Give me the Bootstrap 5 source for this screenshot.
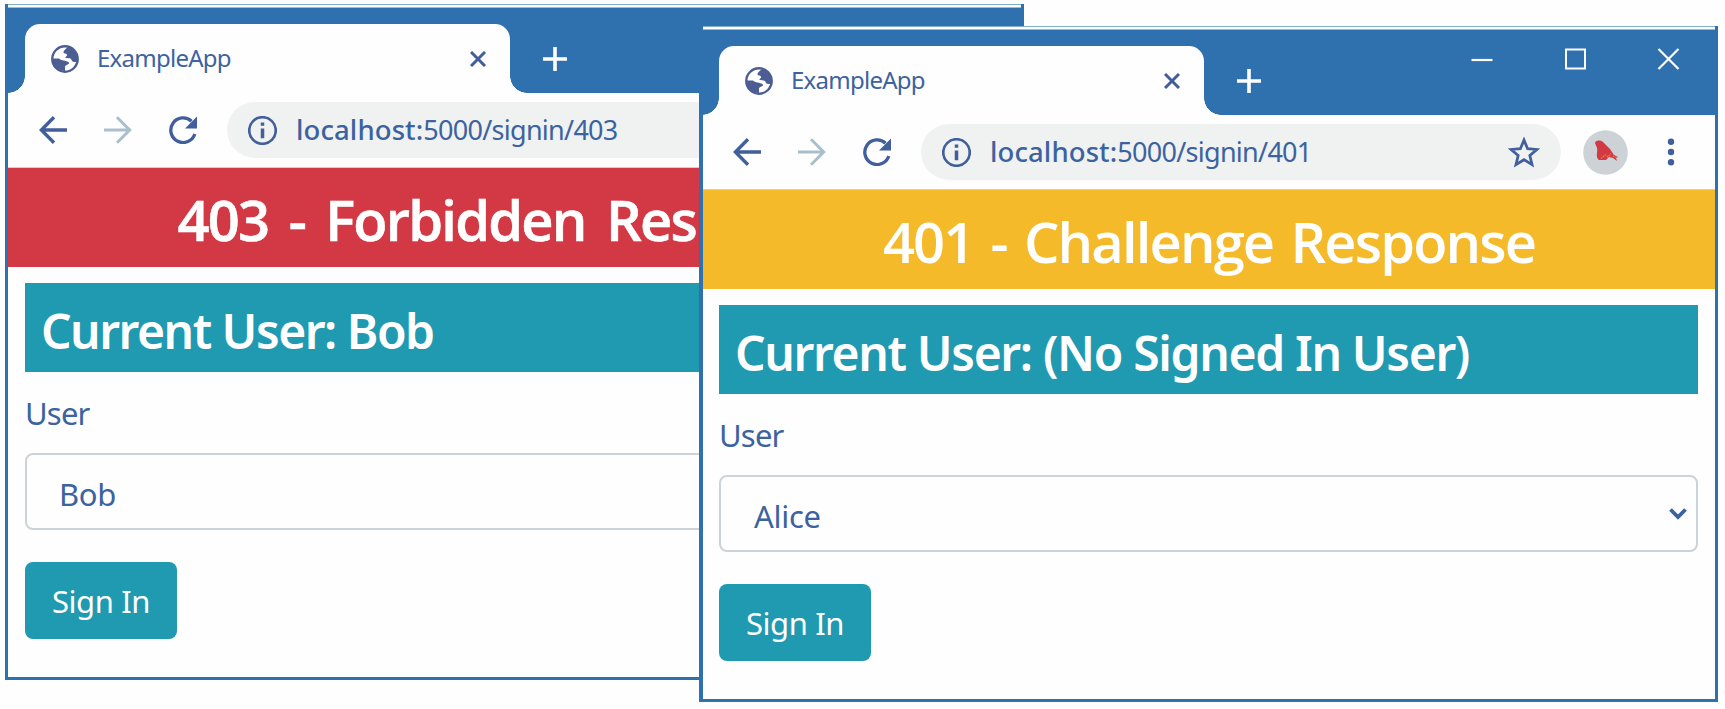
<!DOCTYPE html>
<html lang="en">
<head>
<meta charset="utf-8">
<meta name="viewport" content="width=device-width, initial-scale=1">
<title>ExampleApp</title>
<link href="https://cdn.jsdelivr.net/npm/bootstrap@5.3.0/dist/css/bootstrap.min.css" rel="stylesheet">
<style>
:root{--chrome:#2f70af;--ink:#3c62a0;--teal:#1f9ab1;--line:#cdd2d6}
body{background:#fefefe;font-family:"Noto Sans","Open Sans",sans-serif;color:var(--ink);height:709px;overflow:hidden}
svg{display:block;flex:none;overflow:visible}
.win{position:absolute;width:1019px;height:676px;background:#fefefe;border:3px solid var(--chrome);border-top:0}
.win-a{left:5px;top:4px}
.win-b{left:699px;top:26px}
.win-b{border-left-width:4px}
.win-edge{height:4px;border-top:1px solid #7fb0c8;border-bottom:1px solid #9bbdd2;background:#fff;flex:none}
.strip{height:85px;padding:16px 0 0 17px;background:var(--chrome);flex:none}
.win-b .strip{padding-left:16px}
.tab{position:relative;width:485px;height:69px;background:#fefefe;border-radius:15px 15px 0 0;padding:0 24px 0 26px}
.tab::before,.tab::after{content:"";position:absolute;bottom:0;width:17px;height:17px}
.tab::before{left:-17px;background:radial-gradient(circle at 0 0,var(--chrome) 16.5px,#fefefe 17px)}
.tab::after{right:-17px;background:radial-gradient(circle at 100% 0,var(--chrome) 16.5px,#fefefe 17px)}
.tab-name{font-size:24px;line-height:30px;letter-spacing:-.75px;margin:-1px 0 0 18px}
.new-tab{margin:5px 0 0 33px}
.controls{margin:2px 36px 0 0;gap:71px}
.toolbar-row{height:75px;padding:0 40px 0 31px;flex:none;border-bottom:1px solid var(--line)}
.win-b .toolbar-row{padding-left:30px}
.tool-icon{margin-left:37px}
.avatar{margin-left:22px}
.address{height:56px;border-radius:28px;background:#f0f2f1;margin-left:30px;width:640px;padding:0 22px 0 21px}
.url{font-size:27px;line-height:36px;margin:-1px 0 0 19px;letter-spacing:-.72px;white-space:nowrap}
.url b{font-size:27.5px;font-weight:500;letter-spacing:.1px}
.banner{height:99px;line-height:99px;padding-top:2px;font-family:"Open Sans","Noto Sans",sans-serif;font-size:56px;font-weight:600;color:#fff;text-align:center;margin:0;white-space:nowrap;flex:none}
.banner-no{background:#d33845;letter-spacing:-1.75px;word-spacing:7.5px;-webkit-text-stroke:.6px #fff}
.banner-ask{background:#f4ba29;letter-spacing:-1.85px;word-spacing:4.5px}
.content{padding:16px 17px 0}
.win-b .content{padding-left:16px}
.who{height:89px;line-height:93px;padding-top:1px;background:var(--teal);color:#fff;font-size:48px;font-weight:600;letter-spacing:-1.35px;padding-left:16px;margin:0 0 19px}
.win-a .who{letter-spacing:-1.5px}
.user-label{font-size:31px;line-height:44px;letter-spacing:-.8px;margin-bottom:18px;display:block}
.picker{height:77px;border:2px solid var(--line);border-radius:8px;padding:5px 9px 0 33px;font-size:31px;margin-bottom:32px;letter-spacing:-.3px}
.picker svg{margin-top:-4px}
.win-a .picker{padding-left:32px}
.go{height:77px;width:152px;border-radius:8px;background:var(--teal);color:#fff;font-size:31px;letter-spacing:-.4px;padding:2px 0 0;line-height:75px;border:0}
</style>
</head>
<body>
<svg width="0" height="0" class="position-absolute" aria-hidden="true">
  <symbol id="globe" viewBox="0 0 28 28"><circle cx="14" cy="14" r="12.7" fill="none" stroke="#4b5d93" stroke-width="2.4"/><path d="M17 2C16 3 12.500 5 12.500 7.500C13 9 16 8 16 10C16.500 11.500 13 12 15 13C18 13.500 20 13 20.500 15C21 17 23 17 26 17C28 9 23 2 17 2ZM2 13.500H8C10 16 15 15 18 17.500C18.500 20 14 19.500 14 22V26C7 26 1 20 2 13.500Z" fill="#4b5d93"/></symbol>
  <symbol id="shut" viewBox="0 0 16 16"><path d="M1 1L15 15M15 1L1 15" stroke="#3f5e9a" stroke-width="3" fill="none"/></symbol>
  <symbol id="plus" viewBox="0 0 24 24"><path d="M12 0V24M0 12H24" stroke="#fff" stroke-width="3.600"/></symbol>
  <symbol id="back" viewBox="0 0 28 28"><path d="M28 14H2.500M15 1.300L2.300 14L15 26.700" fill="none" stroke="#405f9c" stroke-width="3.400"/></symbol>
  <symbol id="next" viewBox="0 0 28 28"><path d="M0 14H25.500M13 1.300L25.700 14L13 26.700" fill="none" stroke="#a9bfcc" stroke-width="3"/></symbol>
  <symbol id="reload" viewBox="0 0 28 28"><path d="M25.800 18A12.300 12.300 0 1 1 22.500 5.200" fill="none" stroke="#405f9c" stroke-width="3.300"/><path d="M28 .500V12.500H16Z" fill="#405f9c"/></symbol>
  <symbol id="info" viewBox="0 0 28 28"><circle cx="14" cy="14" r="12.800" fill="none" stroke="#405f9c" stroke-width="2.600"/><path d="M14 12V21.500M14 6.300V9.500" stroke="#405f9c" stroke-width="3.400"/></symbol>
</svg>

<section class="win win-a d-flex flex-column">
  <div class="win-edge"></div>
  <header class="strip d-flex align-items-start">
    <div class="tab d-flex align-items-center">
      <svg width="28" height="28"><use href="#globe"/></svg>
      <span class="tab-name">ExampleApp</span>
      <svg class="ms-auto" width="16" height="16"><use href="#shut"/></svg>
    </div>
    <div class="new-tab d-flex align-items-center h-75 pt-2"><svg width="24" height="24"><use href="#plus"/></svg></div>
  </header>
  <nav class="toolbar-row d-flex align-items-center">
    <svg width="28" height="28"><use href="#back"/></svg>
    <svg class="tool-icon" width="28" height="28"><use href="#next"/></svg>
    <svg class="tool-icon" width="28" height="28"><use href="#reload"/></svg>
    <div class="address d-flex align-items-center">
      <svg width="29" height="29"><use href="#info"/></svg>
      <span class="url"><b>localhost:</b>5000/signin/403</span>
    </div>
  </nav>
  <h1 class="banner banner-no">403 - Forbidden Response</h1>
  <main class="content">
    <h2 class="who">Current User: Bob</h2>
    <span class="user-label">User</span>
    <div class="picker d-flex align-items-center">Bob</div>
    <button type="button" class="btn go">Sign In</button>
  </main>
</section>

<section class="win win-b d-flex flex-column">
  <div class="win-edge"></div>
  <header class="strip d-flex align-items-start">
    <div class="tab d-flex align-items-center">
      <svg width="28" height="28"><use href="#globe"/></svg>
      <span class="tab-name">ExampleApp</span>
      <svg class="ms-auto" width="16" height="16"><use href="#shut"/></svg>
    </div>
    <div class="new-tab d-flex align-items-center h-75 pt-2"><svg width="24" height="24"><use href="#plus"/></svg></div>
    <div class="controls d-flex ms-auto">
      <svg width="22" height="22" viewBox="0 0 22 22"><path d="M.500 12H21.500" stroke="#fff" stroke-width="2.200"/></svg>
      <svg width="22" height="22" viewBox="0 0 22 22"><rect x="2" y="1.500" width="19" height="19" fill="none" stroke="#fff" stroke-width="2"/></svg>
      <svg width="22" height="22" viewBox="0 0 22 22"><path d="M1.500 1L21.500 21M21.500 1L1.500 21" stroke="#fff" stroke-width="2.200"/></svg>
    </div>
  </header>
  <nav class="toolbar-row d-flex align-items-center">
    <svg width="28" height="28"><use href="#back"/></svg>
    <svg class="tool-icon" width="28" height="28"><use href="#next"/></svg>
    <svg class="tool-icon" width="28" height="28"><use href="#reload"/></svg>
    <div class="address d-flex align-items-center">
      <svg width="29" height="29"><use href="#info"/></svg>
      <span class="url"><b>localhost:</b>5000/signin/401</span>
      <svg class="ms-auto" width="30" height="29" viewBox="0 0 30 29"><path d="M15 3.500L18.300 11.300L26.700 12L20.300 17.500L22.300 25.700L15 21.300L7.700 25.700L9.700 17.500L3.300 12L11.700 11.300Z" transform="translate(-1.500 -1.700) scale(1.1)" fill="none" stroke="#405f9c" stroke-width="2.500"/></svg>
    </div>
    <svg class="avatar" width="45" height="45" viewBox="0 0 45 45"><circle cx="22.500" cy="22.500" r="22.300" fill="#cdd2d7"/><path d="M12 13C13 10 17 10 20 12L27 19L31 25L35 27L33 28L34 31L30 28L26 27L23 30L16 30C12 27 15 22 14 18Z" fill="#d33845"/><path d="M18 28.500L22 25L25 27L28 23.500M30 26L34 28" stroke="#df7a38" stroke-width="1.500" stroke-dasharray="1.500 1" fill="none"/></svg>
    <svg class="ms-auto" width="8" height="28" viewBox="0 0 8 28"><g fill="#405f9c"><circle cx="4" cy="3.800" r="3.200"/><circle cx="4" cy="14" r="3.200"/><circle cx="4" cy="24.200" r="3.200"/></g></svg>
  </nav>
  <h1 class="banner banner-ask">401 - Challenge Response</h1>
  <main class="content">
    <h2 class="who">Current User: (No Signed In User)</h2>
    <span class="user-label">User</span>
    <div class="picker d-flex align-items-center justify-content-between">Alice
      <svg width="18" height="12" viewBox="0 0 18 12"><path d="M1.500 1.500L9 9L16.500 1.500" fill="none" stroke="#3b629f" stroke-width="3.800"/></svg>
    </div>
    <button type="button" class="btn go">Sign In</button>
  </main>
</section>
<script src="https://cdn.jsdelivr.net/npm/bootstrap@5.3.0/dist/js/bootstrap.bundle.min.js"></script>
</body>
</html>
